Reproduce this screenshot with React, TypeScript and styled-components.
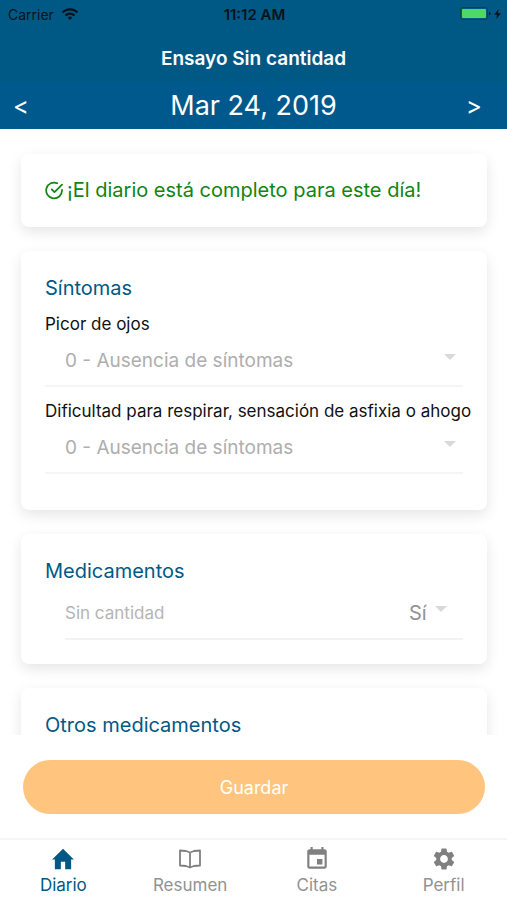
import React, { useId } from "react";
import styled, { createGlobalStyle } from "styled-components";
import { MdEvent, MdSettings, MdWifi } from "react-icons/md";

const GlobalStyle = createGlobalStyle`
  * { box-sizing: border-box; }
  body {
    margin: 0;
    background: #fff;
    color: #111;
    font-family: Inter, "Liberation Sans", sans-serif;
  }
  button, select { font-family: inherit; }
`;

const Screen = styled.div`
  display: flex;
  flex-direction: column;
  height: 100vh;
`;

const Header = styled.header`
  flex: none;
  background: #005985;
  color: #fff;
`;

const StatusBar = styled.div`
  display: grid;
  grid-template-columns: 1fr auto 1fr;
  align-items: center;
  height: 28px;
  padding: 0 6px 0 8px;
  color: #08121a;
  font-size: 14px;
`;

const StatusGroup = styled.div<{ $end?: boolean }>`
  display: flex;
  align-items: center;
  justify-content: ${(p) => (p.$end ? "flex-end" : "flex-start")};
  gap: ${(p) => (p.$end ? 3 : 7)}px;
`;

const Clock = styled.time`
  font-size: 15px;
  font-weight: 600;
`;

const TrialName = styled.h1`
  margin: 0;
  padding: 19px 0 11px;
  font-size: 19px;
  font-weight: 600;
  line-height: 24px;
  text-align: center;
`;

const DateBar = styled.div`
  display: grid;
  grid-template-columns: 1fr auto 1fr;
  align-items: center;
  height: 47px;
  background: #00598d;
`;

const DateText = styled.time`
  font-size: 27px;
  line-height: 32px;
`;

const DateButton = styled.button<{ $next?: boolean }>`
  justify-self: ${(p) => (p.$next ? "end" : "start")};
  width: 36px;
  height: 40px;
  margin: ${(p) => (p.$next ? "0 15px 0 0" : "0 0 0 3px")};
  padding: 0;
  border: 0;
  background: none;
  color: #fff;
  font-size: 24px;
`;

const Content = styled.main`
  flex: 1;
  min-height: 0;
  display: flex;
  flex-direction: column;
  gap: 24px;
  padding: 25px 20px 24px 21px;
  overflow-y: auto;
  scrollbar-width: none;
`;

const Card = styled.section`
  flex: none;
  padding: 24px;
  border-radius: 8px;
  background: #fff;
  box-shadow: 0 5px 14px rgba(0, 0, 0, 0.1);
`;

const CompleteMessage = styled.p`
  display: flex;
  align-items: center;
  gap: 3px;
  margin: 0;
  color: #118511;
  font-size: 20px;
  line-height: 25px;
`;

const CardTitle = styled.h2`
  margin: 3px 0;
  color: #005985;
  font-size: 20px;
  font-weight: 400;
  line-height: 20px;
`;

const SymptomsCard = styled(Card)`
  ${CardTitle} {
    margin-bottom: 14px;
  }
`;

const Symptom = styled.div`
  margin-bottom: 12px;
`;

const SymptomLabel = styled.label`
  display: block;
  margin-right: -16px;
  font-size: 17px;
  line-height: 24px;
`;

const SelectBox = styled.div`
  display: grid;
  align-items: center;
  height: 51px;
  border-bottom: 2px solid #f5f5f5;
`;

const Select = styled.select`
  grid-area: 1 / 1;
  width: 100%;
  height: 40px;
  padding: 0 32px 0 20px;
  border: 0;
  background: none;
  appearance: none;
  color: #aeaeae;
  font-size: 19px;
  opacity: 1;
`;

const Arrow = styled.svg`
  grid-area: 1 / 1;
  justify-self: end;
  width: 12px;
  height: 6px;
  margin: 0 7px 7px 0;
  fill: #d9d9d9;
  pointer-events: none;
`;

const MedicineRow = styled.div`
  display: flex;
  align-items: center;
  justify-content: space-between;
  height: 56px;
  margin-left: 20px;
  padding-top: 3px;
  border-bottom: 2px solid #f3f3f3;
`;

const MedicineLabel = styled.label`
  color: #b5b5b5;
  font-size: 17px;
`;

const DoseBox = styled.div`
  display: grid;
  align-items: center;
  margin-right: 9px;
`;

const DoseSelect = styled(Select)`
  padding: 0 27px 0 0;
  color: #929292;
  font-size: 20px;
`;

const SaveArea = styled.div`
  flex: none;
  padding: 25px 22px 24px 23px;
`;

const SaveButton = styled.button`
  display: block;
  width: 100%;
  height: 54px;
  border: 0;
  border-radius: 27px;
  background: #ffc57f;
  color: #fff;
  font-size: 18px;
`;

const TabBar = styled.nav`
  flex: none;
  display: grid;
  grid-template-columns: repeat(4, 1fr);
  height: 62px;
  border-top: 2px solid #f5f5f5;
`;

const Tab = styled.a<{ $active?: boolean }>`
  display: flex;
  flex-direction: column;
  align-items: center;
  padding-top: 6px;
  color: ${(p) => (p.$active ? "#005985" : "#929292")};
  font-size: 17px;
  line-height: 26px;
  text-decoration: none;

  svg {
    color: ${(p) => (p.$active ? "#005985" : "#808080")};
  }
`;

const DownArrow = () => (
  <Arrow viewBox="0 0 12 6" aria-hidden="true">
    <path d="M0 0h12L6 6z" />
  </Arrow>
);

const CheckCircleIcon = () => (
  <svg
    width="19"
    height="19"
    viewBox="0 0 24 24"
    fill="none"
    stroke="currentColor"
    strokeWidth="2.2"
    strokeLinecap="round"
    strokeLinejoin="round"
    aria-hidden="true"
  >
    <path d="M21.500 11.080V12a10 10 0 1 1-5.930-9.140" />
    <path d="M21.500 4.500 12 14.010l-3.500-3.500" />
  </svg>
);

const BatteryIcon = () => (
  <svg width="31" height="14" viewBox="0 0 31 14" aria-hidden="true">
    <rect x="0.5" y="0.5" width="27" height="12" rx="2" fill="none" stroke="#064058" />
    <rect x="2" y="2" width="24" height="9" rx="1" fill="#4cd964" />
    <path d="M29 5a1.500 1.500 0 0 1 0 3z" fill="#08121a" />
  </svg>
);

const BoltIcon = () => (
  <svg width="7" height="10" viewBox="0 0 8 12" aria-hidden="true">
    <path d="M5.500 0 0 7H3.500L2.500 12 8 5H4.500z" fill="#08121a" />
  </svg>
);

const HomeIcon = () => (
  <svg width="26" height="26" viewBox="0 0 24 24" fill="currentColor" aria-hidden="true">
    <path d="M10 21.500v-7h4v7h5.500V12.500h2.500L12 2.500 2 12.500h2.500v9z" />
  </svg>
);

const BookIcon = () => (
  <svg
    width="26"
    height="26"
    viewBox="0 0 26 26"
    fill="none"
    stroke="currentColor"
    strokeWidth="1.8"
    strokeLinejoin="round"
    aria-hidden="true"
  >
    <path d="M13 6.500 9 5 3 4.500v15l6 0.500 4 1.500 4-1.500 6-0.500v-15L17 5zM13 6.500v15" />
  </svg>
);

function SymptomField({ label }: { label: string }) {
  const id = useId();
  return (
    <Symptom>
      <SymptomLabel htmlFor={id}>{label}</SymptomLabel>
      <SelectBox>
        <Select id={id} disabled>
          <option>0 - Ausencia de síntomas</option>
        </Select>
        <DownArrow />
      </SelectBox>
    </Symptom>
  );
}

const tabs = [
  { name: "Diario", icon: <HomeIcon />, active: true },
  { name: "Resumen", icon: <BookIcon /> },
  { name: "Citas", icon: <MdEvent size={26} /> },
  { name: "Perfil", icon: <MdSettings size={26} /> },
];

export default function App() {
  return (
    <Screen>
      <GlobalStyle />
      <Header>
        <StatusBar>
          <StatusGroup>
            Carrier <MdWifi size={18} />
          </StatusGroup>
          <Clock>11:12 AM</Clock>
          <StatusGroup $end>
            <BatteryIcon />
            <BoltIcon />
          </StatusGroup>
        </StatusBar>
        <TrialName>Ensayo Sin cantidad</TrialName>
        <DateBar>
          <DateButton aria-label="Día anterior">&lt;</DateButton>
          <DateText dateTime="2019-03-24">Mar 24, 2019</DateText>
          <DateButton $next aria-label="Día siguiente">&gt;</DateButton>
        </DateBar>
      </Header>
      <Content>
        <Card>
          <CompleteMessage>
            <CheckCircleIcon />
            ¡El diario está completo para este día!
          </CompleteMessage>
        </Card>
        <SymptomsCard>
          <CardTitle>Síntomas</CardTitle>
          <SymptomField label="Picor de ojos" />
          <SymptomField label="Dificultad para respirar, sensación de asfixia o ahogo" />
        </SymptomsCard>
        <Card>
          <CardTitle>Medicamentos</CardTitle>
          <MedicineRow>
            <MedicineLabel htmlFor="dose">Sin cantidad</MedicineLabel>
            <DoseBox>
              <DoseSelect id="dose" disabled>
                <option>Sí</option>
              </DoseSelect>
              <DownArrow />
            </DoseBox>
          </MedicineRow>
        </Card>
        <Card>
          <CardTitle>Otros medicamentos</CardTitle>
        </Card>
      </Content>
      <SaveArea>
        <SaveButton disabled>Guardar</SaveButton>
      </SaveArea>
      <TabBar>
        {tabs.map((tab) => (
          <Tab key={tab.name} href="#" $active={tab.active} aria-current={tab.active ? "page" : undefined}>
            {tab.icon}
            {tab.name}
          </Tab>
        ))}
      </TabBar>
    </Screen>
  );
}
